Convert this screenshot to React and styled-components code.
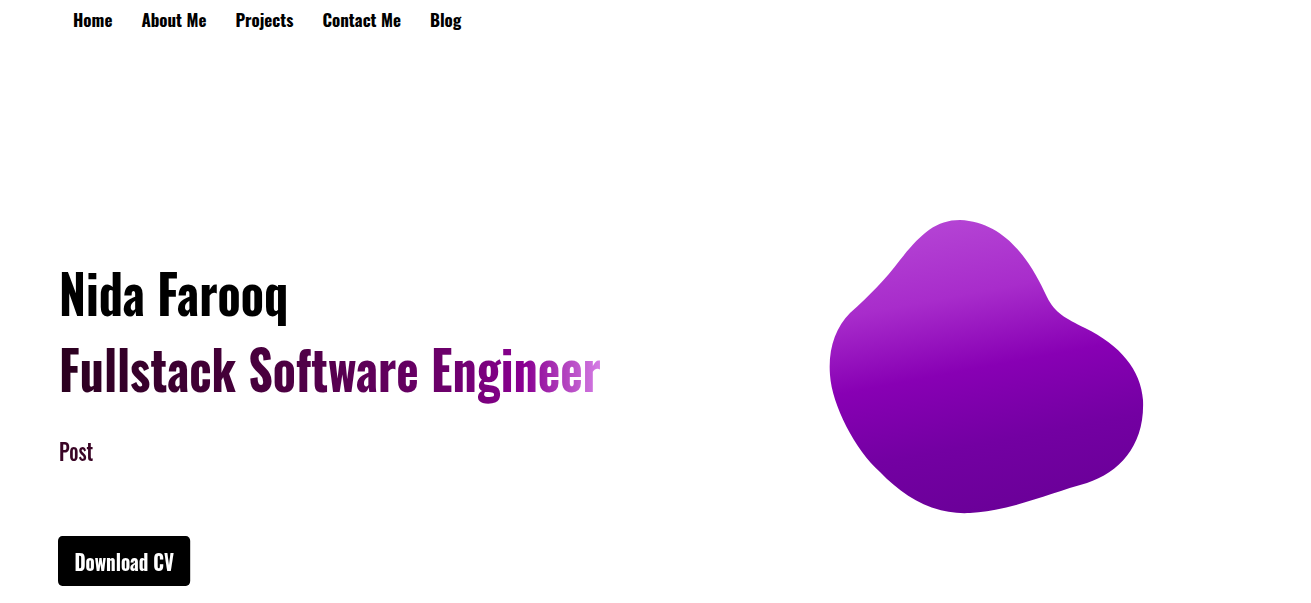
import React from 'react'
import styled, { createGlobalStyle, css } from 'styled-components'

const GlobalStyle = createGlobalStyle`
  body {
    margin: 0;
    background: #fff;
    font-family: "Oswald", "Roboto Condensed", "DejaVu Sans Condensed", sans-serif;
  }
`

const narrow = (x) => css`
  transform: scaleX(${x});
  transform-origin: left center;
`

const links = ['Home', 'About Me', 'Projects', 'Contact Me', 'Blog']

const App = () => {
  return (
    <>
      <GlobalStyle />
      <Nav>
        {links.map((l) => (
          <NavLink key={l} href="#">{l}</NavLink>
        ))}
      </Nav>
      <Hero>
        <Intro>
          <Name>Nida Farooq</Name>
          <Role>Fullstack Software Engineer</Role>
          <Post>Post</Post>
          <CvButton>Download CV</CvButton>
        </Intro>
        <BlobWrap>
          <svg width="330" height="310" viewBox="0 0 330 310">
            <defs>
              <linearGradient id="blobFill" x1="0.4" y1="0" x2="0.6" y2="1">
                <stop offset="0" stopColor="#b443d4" />
                <stop offset="0.25" stopColor="#a82ccb" />
                <stop offset="0.5" stopColor="#8800b4" />
                <stop offset="0.75" stopColor="#7300a2" />
                <stop offset="1" stopColor="#6a0098" />
              </linearGradient>
            </defs>
            <path
              fill="url(#blobFill)"
              d="M140,10 C115,10 100,25 80,50 C65,70 50,85 30,103 C15,118 8,140 10,165 C12,195 35,240 60,262 C85,288 115,305 150,303 C190,301 230,283 267,273 C300,262 325,235 323,190 C321,160 300,135 265,118 C245,108 235,103 227,87 C210,50 185,12 140,10 Z"
            />
          </svg>
        </BlobWrap>
      </Hero>
    </>
  )
}

export default App

const Nav = styled.nav`
  display: flex;
  gap: 29px;
  height: 40px;
  padding-left: 73px;
`

const NavLink = styled.a`
  font-size: 17px;
  font-weight: 700;
  line-height: 40px;
  color: #000;
  text-decoration: none;
  white-space: nowrap;
`

const Hero = styled.section`
  display: grid;
  grid-template-columns: minmax(0, 1fr) minmax(0, 1fr);
  align-items: start;
`

const Intro = styled.div`
  padding: 213px 0 0 59px;
  display: flex;
  flex-direction: column;
  align-items: flex-start;
`

const Name = styled.h1`
  margin: 0;
  font-size: 55px;
  font-weight: 700;
  line-height: 76px;
  color: #000;
  white-space: nowrap;
  ${narrow(0.873)}
`

const Role = styled.h2`
  margin: 0;
  font-size: 55px;
  font-weight: 700;
  line-height: 76px;
  white-space: nowrap;
  background: linear-gradient(to right, #2b001f 0%, #4b0040 40%, #6d006c 72%, #8a0092 86%, #d67ee6 100%);
  -webkit-background-clip: text;
  background-clip: text;
  color: transparent;
  ${narrow(0.87)}
`

const Post = styled.p`
  margin: 32px 0 0;
  font-size: 23px;
  font-weight: 500;
  line-height: 28px;
  color: #3a0526;
  ${narrow(0.88)}
`

const CvButton = styled.button`
  margin: 71px 0 0 -1px;
  height: 50px;
  padding: 0 19px;
  border: none;
  border-radius: 5px;
  background: #000;
  color: #fff;
  font-family: inherit;
  font-size: 22px;
  font-weight: 700;
  cursor: pointer;
  ${narrow(0.864)}
`

const BlobWrap = styled.div`
  display: flex;
  justify-content: center;
  padding-top: 170px;
  padding-left: 4px;
`
